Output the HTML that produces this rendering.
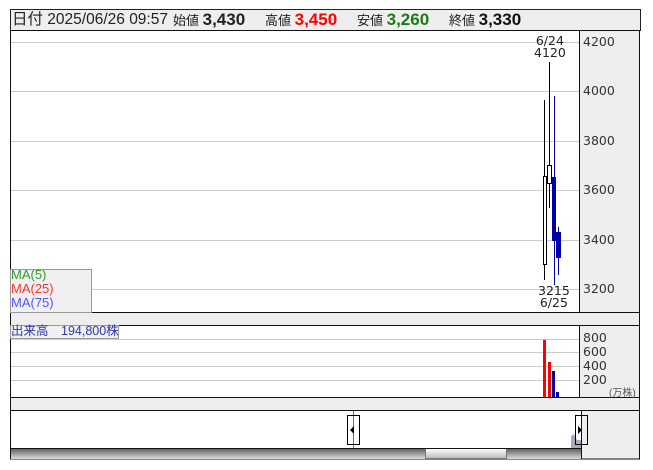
<!DOCTYPE html>
<html><head><meta charset="utf-8"><style>
body{margin:0;width:653px;height:470px;background:#fff;position:relative;overflow:hidden;font-family:"Liberation Sans","Noto Sans CJK JP",sans-serif}
.a{position:absolute;white-space:nowrap}
.hdr{left:10px;top:9px;width:629px;height:20px;background:#eee;border:1px solid #222;font-size:13px;line-height:20px;color:#222}
.hdr b{font-size:17px}
.ax{font-family:"DejaVu Sans","Liberation Sans",sans-serif;font-size:12.5px;color:#333}
</style></head><body>
<div class="a hdr"><span class="a" style="left:1px"><span style="font-size:15.5px">日付 2025/06/26 09:57</span></span><span class="a" style="left:162px">始値 <b>3,430</b></span><span class="a" style="left:254px">高値 <b style="color:#f00">3,450</b></span><span class="a" style="left:346px">安値 <b style="color:#1a7a1a">3,260</b></span><span class="a" style="left:438px">終値 <b style="color:#111">3,330</b></span></div>
<svg class="a" style="left:0;top:0" width="653" height="470">
<rect x="10.5" y="30.5" width="629" height="428" fill="#eee" stroke="#111"/>
<rect x="10.5" y="30.5" width="569" height="282" fill="#fff" stroke="#111"/>
<rect x="10.5" y="325.5" width="569" height="72" fill="#fff" stroke="#111"/>
<rect x="579.5" y="325.5" width="60" height="72" fill="#eee" stroke="#111"/>
<rect x="10.5" y="410.5" width="629" height="48.5" fill="#eee" stroke="#111"/>
<rect x="11" y="411" width="570" height="37" fill="#fff"/>
<line x1="10" y1="312.5" x2="640" y2="312.5" stroke="#111"/>
<line x1="10" y1="397.5" x2="640" y2="397.5" stroke="#111"/>
<g stroke="#ccc">
<line x1="11" y1="42.5" x2="579" y2="42.5"/><line x1="11" y1="91.5" x2="579" y2="91.5"/><line x1="11" y1="141.5" x2="579" y2="141.5"/><line x1="11" y1="190.5" x2="579" y2="190.5"/><line x1="11" y1="240.5" x2="579" y2="240.5"/><line x1="11" y1="289.5" x2="579" y2="289.5"/>
<line x1="11" y1="339.5" x2="579" y2="339.5"/><line x1="11" y1="352.5" x2="579" y2="352.5"/><line x1="11" y1="366.5" x2="579" y2="366.5"/><line x1="11" y1="380.5" x2="579" y2="380.5"/>
</g>
<line x1="544.5" y1="100" x2="544.5" y2="280" stroke="#000"/>
<rect x="543.5" y="176.5" width="3" height="88" fill="#fff" stroke="#000"/>
<line x1="549.5" y1="62" x2="549.5" y2="208" stroke="#000"/>
<rect x="547.5" y="165.5" width="4" height="18" fill="#fff" stroke="#000"/>
<line x1="554.5" y1="96" x2="554.5" y2="285" stroke="#00a"/>
<rect x="552" y="177" width="4" height="64" fill="#00a"/>
<line x1="558.5" y1="227" x2="558.5" y2="275" stroke="#00a"/>
<rect x="556" y="232" width="5" height="26" fill="#00a"/>
<rect x="543" y="340" width="3" height="57" fill="#f00"/>
<rect x="548" y="362" width="3" height="35" fill="#f00"/>
<rect x="552" y="371" width="3" height="26" fill="#00a"/>
<rect x="556" y="392" width="3" height="5" fill="#00a"/>
<line x1="353.5" y1="411" x2="353.5" y2="448" stroke="#09c"/>
<line x1="581.5" y1="411" x2="581.5" y2="448" stroke="#09c"/>
<path d="M571 448 L571 436 L574 434 L577 440 L581 440 L581 448Z" fill="#aab" />
<rect x="347.5" y="415.5" width="12" height="29" fill="none" stroke="#000"/>
<path d="M350 430 L354 426 L354 434Z" fill="#000"/>
<rect x="575.5" y="415.5" width="12" height="29" fill="none" stroke="#000"/>
<path d="M582 430 L578 426 L578 434Z" fill="#000"/>
<defs><linearGradient id="g" x1="0" y1="0" x2="0" y2="1"><stop offset="0" stop-color="#555"/><stop offset="1" stop-color="#ddd"/></linearGradient>
<linearGradient id="t" x1="0" y1="0" x2="0" y2="1"><stop offset="0" stop-color="#fff"/><stop offset="1" stop-color="#bbb"/></linearGradient></defs>
<rect x="11" y="448" width="570" height="11" fill="url(#g)"/>
<rect x="425.5" y="448.5" width="81" height="10" fill="url(#t)" stroke="#777"/>
<line x1="10" y1="448.5" x2="581" y2="448.5" stroke="#111"/>
<line x1="581.5" y1="411" x2="581.5" y2="459" stroke="#111"/>
<rect x="10.5" y="269.5" width="81" height="43" fill="#f0f0f0" stroke="#999"/>
<rect x="10.5" y="325.5" width="108" height="13" fill="#f0f0f0" stroke="#999"/>
</svg>
<div class="a ax" style="left:583px;top:34px">4200</div>
<div class="a ax" style="left:583px;top:83px">4000</div>
<div class="a ax" style="left:583px;top:133px">3800</div>
<div class="a ax" style="left:583px;top:182px">3600</div>
<div class="a ax" style="left:583px;top:232px">3400</div>
<div class="a ax" style="left:583px;top:281px">3200</div>
<div class="a ax" style="left:534px;top:35px;line-height:12px;text-align:center;color:#222">6/24<br>4120</div>
<div class="a ax" style="left:538px;top:285px;line-height:12px;text-align:center;color:#222">3215<br>6/25</div>
<div class="a ax" style="left:583px;top:331px;line-height:14px">800<br>600<br>400<br>200</div>
<div class="a" style="left:609px;top:384px;font-size:10px;color:#555">(万株)</div>
<div class="a" style="left:11px;top:268px;font-size:13px;line-height:14px"><span style="color:#393">MA(5)</span><br><span style="color:#f33">MA(25)</span><br><span style="color:#55f">MA(75)</span></div>
<div class="a" style="left:11px;top:324px;font-size:12.5px;line-height:14px;color:#33a">出来高　194,800株</div>
</body></html>
